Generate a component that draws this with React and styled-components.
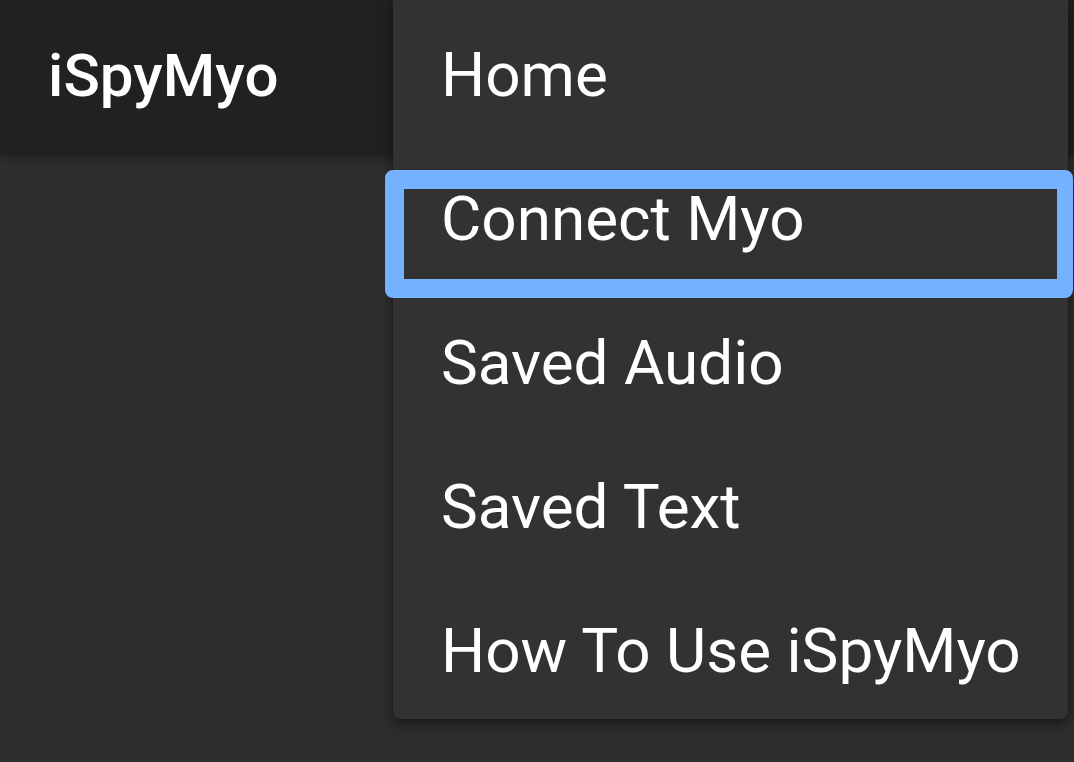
import React from "react";
import styled, { createGlobalStyle } from "styled-components";

const Global = createGlobalStyle`
  html, body { margin: 0; padding: 0; }
  body {
    background: #2e2e2e;
    font-family: Roboto, "Noto Sans", "Liberation Sans", sans-serif;
    color: #fff;
    overflow: hidden;
  }
`;

const Page = styled.div`
  position: relative;
  width: 1074px;
  height: 762px;
  background: #2e2e2e;
`;

const AppBar = styled.header`
  height: 155px;
  background: #212121;
  box-shadow: 0 4px 10px rgba(0, 0, 0, 0.25);
  display: flex;
  align-items: flex-start;
  padding-left: 48px;
  box-sizing: border-box;
`;

const Title = styled.h1`
  margin: 0;
  font-size: 60px;
  font-weight: 500;
  padding-top: 7px;
  height: 137px;
  line-height: 137px;
  letter-spacing: 0.1px;
`;

const Menu = styled.nav`
  position: absolute;
  left: 393px;
  top: 0;
  width: 675px;
  height: 719px;
  background: #323232;
  border-radius: 0 0 8px 8px;
  box-shadow: 0 6px 18px rgba(0, 0, 0, 0.35), 0 2px 6px rgba(0, 0, 0, 0.25);
  display: flex;
  flex-direction: column;
`;

const Item = styled.div`
  position: relative;
  height: 138px;
  padding: 6px 0 0 48px;
  line-height: 138px;
  font-size: 62px;
  font-weight: 400;
  white-space: nowrap;

  ${({ $focused }) =>
    $focused &&
    `
    &::after {
      content: "";
      position: absolute;
      left: -8px;
      top: 26px;
      width: 688px;
      height: 128px;
      box-sizing: border-box;
      border: 19px solid #74b1ff;
      border-right-width: 16px;
      border-radius: 8px;
      pointer-events: none;
    }
  `}
`;

const Label = styled.span`
  position: relative;
  z-index: 1;
`;

const items = ["Home", "Connect Myo", "Saved Audio", "Saved Text", "How To Use iSpyMyo"];

export default function App() {
  return (
    <Page>
      <Global />
      <AppBar>
        <Title>iSpyMyo</Title>
      </AppBar>
      <Menu>
        {items.map((t, i) => (
          <Item key={t} $focused={i === 1}>
            <Label>{t}</Label>
          </Item>
        ))}
      </Menu>
    </Page>
  );
}
